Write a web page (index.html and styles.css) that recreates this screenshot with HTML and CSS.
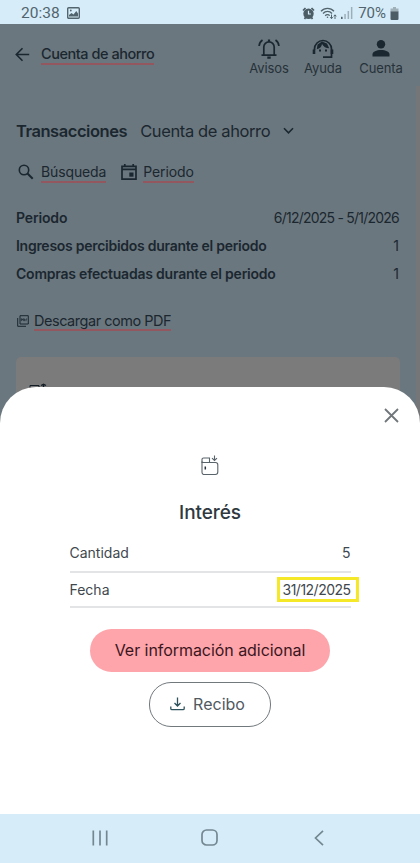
FILE: index.html
```html
<!DOCTYPE html>
<html lang="es">
<head>
<meta charset="utf-8">
<meta name="viewport" content="width=device-width, initial-scale=1">
<title>Cuenta de ahorro</title>
<link rel="stylesheet" href="styles.css">
</head>
<body>
<div class="status">
  <span class="clock">20:38</span>
  <svg class="picture" width="13" height="12" viewBox="0 0 13 12"><rect x=".7" y=".7" width="11.6" height="10.6" rx="1" fill="none" stroke="#52646d" stroke-width="1.4"/><path d="M2 9.5V8l2.5-2 2 1.5L9.3 4 11 6.500v3z" fill="#52646d"/><circle cx="3.800" cy="3.500" r=".9" fill="#52646d"/></svg>
  <div class="indicators">
    <svg width="13" height="13" viewBox="0 0 13 13"><circle cx="6.500" cy="6.800" r="5.200" fill="#4c5d66"/><path d="M1 3.500 3.500 1M12 3.500 9.500 1M2.500 12l1-1.500M10.500 12l-1-1.500" stroke="#4c5d66" stroke-width="1.700"/><path d="M6.500 3.800v3.200h2.400" stroke="#d6edf9" stroke-width="1.200" fill="none"/></svg>
    <svg class="wifi" width="17" height="13" viewBox="0 0 17 13" fill="none" stroke="#52646d" stroke-width="1.300"><path d="M1 4.300C4.500.3 10.500.3 14 4.300M3 6.500c2.600-2.900 6.500-2.900 9 0M5.200 8.700c1.300-1.500 3.300-1.500 4.500 0"/><circle cx="7.500" cy="10.300" r=".8" fill="#52646d" stroke="none"/><path d="M11.500 7.500v4m-1.300-1.300 1.300 1.500 1.300-1.500M15 12V8m-1.300 1.300L15 7.800l1.300 1.500" stroke-width="1"/></svg>
    <svg class="signal" width="12" height="12" viewBox="0 0 12 12" fill="#9caeb7"><path d="M0 9.500h1.500V12H0zM3.300 7h1.500v5H3.300zM6.600 4h1.500v8H6.600zM9.900 0h1.500v12H9.900z"/><path d="M0 10h1.500v2H0z" fill="#52646d"/></svg>
    <span class="percent">70%</span>
    <svg width="9" height="13" viewBox="0 0 9 13"><path d="M3 0h3v1.500h2.500V5H.5V1.500H3z" fill="#9fb0b9"/><path d="M.5 4.500h8V12a1 1 0 0 1-1 1h-6a1 1 0 0 1-1-1z" fill="#4c5d66"/></svg>
  </div>
</div>

<div class="page">
  <header class="top">
    <svg class="back" width="15" height="15" viewBox="0 0 15 15"><path d="M14.200 7.500H1.500M7.500 1.300 1.300 7.500l6.200 6.200" fill="none" stroke="#1b2730" stroke-width="1.600"/></svg>
    <a class="link title">Cuenta de ahorro</a>
    <nav class="actions">
      <div class="action avisos">
        <svg width="22" height="22" viewBox="0 0 22 22" fill="none" stroke="#1b2730" stroke-width="1.700"><path d="M3.500 17.200h15M5.800 17V9a5.200 5.200 0 0 1 10.400 0v8M4.500 2C2.300 3.500 1.300 5.500 1.100 8M17.500 2c2.200 1.500 3.200 3.500 3.400 6"/><path d="M11 4V1.500M9.300 19.700h3.400" stroke-width="2.200"/></svg>
        <span>Avisos</span>
      </div>
      <div class="action ayuda">
        <svg width="22" height="22" viewBox="0 0 22 22" fill="none" stroke="#1b2730" stroke-width="1.700"><path d="M2.500 12v-1a8.500 8.500 0 0 1 17 0v8.200H11"/><path d="M2 11.500v4.500M20 11.500v4.500" stroke-width="2.600"/><path d="M4.800 11.200C8 10.500 9.500 9 10 6c1.500 2.800 4 4.300 7.200 4.300L15 5.500l-5-2-4.500 3z" fill="#1b2730" stroke="none"/><path d="M8 11.600v2M14 11.600v2" stroke-width="2"/></svg>
        <span>Ayuda</span>
      </div>
      <div class="action cuenta">
        <svg width="22" height="22" viewBox="0 0 22 22" fill="#1b2730"><circle cx="11" cy="6.200" r="4.200"/><path d="M2.500 18.500v-2.200c0-2.600 4-4.300 8.500-4.300s8.500 1.700 8.500 4.300v2.200z"/></svg>
        <span>Cuenta</span>
      </div>
    </nav>
  </header>
  <main class="content">
    <div class="heading">
      <h1>Transacciones</h1>
      <span class="account">Cuenta de ahorro</span>
      <svg width="11" height="8" viewBox="0 0 11 8"><path d="m1 1.200 4.500 4.600L10 1.200" fill="none" stroke="#1b2730" stroke-width="1.600"/></svg>
    </div>
    <div class="filters">
      <svg width="16" height="16" viewBox="0 0 16 16" fill="none" stroke="#1b2730"><circle cx="6" cy="6" r="4.700" stroke-width="1.600"/><path d="m9.500 9.500 5.200 5.200" stroke-width="2"/></svg>
      <a class="link search">Búsqueda</a>
      <svg class="calendar" width="16" height="18" viewBox="0 0 16 18"><path d="M1 3.300h14v12.900H1zM1 6.300h14M3.800 1v2M12.200 1v2" fill="none" stroke="#1b2730" stroke-width="1.700"/><path d="M8.300 9.500h4.200v4.200H8.300z" fill="#1b2730"/></svg>
      <a class="link period">Periodo</a>
    </div>
    <dl class="summary">
      <div><dt class="s1">Periodo</dt><dd class="range">6/12/2025 - 5/1/2026</dd></div>
      <div><dt class="s2">Ingresos percibidos durante el periodo</dt><dd>1</dd></div>
      <div><dt class="s3">Compras efectuadas durante el periodo</dt><dd>1</dd></div>
    </dl>
    <div class="download">
      <svg width="12" height="12" viewBox="0 0 12 12" fill="none" stroke="#1b2730"><path d="M3 .7h8.300V9H3zM.7 3v8.300H9"/><path d="M4.300 3.500v2.600M4.300 4h1.200v1H4.300M6.600 3.500v2.300h1V4h-1M9 6.200V4h1.200" stroke-width=".7"/></svg>
      <a class="link pdf">Descargar como PDF</a>
    </div>
    <div class="card">
      <svg width="20" height="20" viewBox="0 0 20 20" fill="none" stroke="#111c24"><path d="M1 9V2.500h9V5"/><path d="m12 2.500 2.500-1.300L17 2.500M14.500 1v6" stroke-width="1.400"/></svg>
    </div>
  </main>
</div>

<section class="sheet">
  <svg class="close" width="15" height="15" viewBox="0 0 15 15"><path d="m1 1 13 13M14 1 1 14" stroke="#707679" stroke-width="1.800"/></svg>
  <svg class="wallet" width="18" height="21" viewBox="0 0 18 21" fill="none" stroke="#59636a" stroke-width="1.100"><path d="M1 8V4.500A1.500 1.500 0 0 1 2.500 3h6v4"/><path d="M1 6.500C1 7.300 1.500 7.500 2.500 7.500h12A2.300 2.300 0 0 1 16.800 9.800V17a2.500 2.500 0 0 1-2.500 2.500H3.300A2.300 2.300 0 0 1 1 17z"/><path d="M4.300 11.500v3" stroke="#263038" stroke-width="1.500"/><path d="M13.500.5v5M11 3.200l2.500 2.300L16 3.200"/></svg>
  <h2>Interés</h2>
  <div class="details">
    <div class="detail"><span class="k1">Cantidad</span><span>5</span></div>
    <div class="detail"><span class="k2">Fecha</span><span class="marked">31/12/2025</span></div>
  </div>
  <button class="primary"><span>Ver información adicional</span></button>
  <button class="secondary">
    <svg width="15" height="14" viewBox="0 0 15 14" fill="none" stroke="#2f535c" stroke-width="1.300"><path d="M7.500.5v8.300M4.500 6l3 3 3-3M.8 9.500v2q0 1.200 1.200 1.200h11q1.200 0 1.200-1.200v-2"/></svg>
    <span>Recibo</span>
  </button>
</section>

<div class="navbar">
  <svg width="16" height="16" viewBox="0 0 16 16"><path d="M1.300.5v15M8 .5v15M14.700.5v15" stroke="#738791" stroke-width="1.700"/></svg>
  <svg width="17" height="17" viewBox="0 0 17 17"><rect x="1" y="1" width="15" height="15" rx="4.500" fill="none" stroke="#738791" stroke-width="1.700"/></svg>
  <svg width="10" height="16" viewBox="0 0 10 16"><path d="M9 .8 1.500 8 9 15.200" fill="none" stroke="#738791" stroke-width="1.700"/></svg>
</div>
</body>
</html>
```
FILE: styles.css
```css
* { box-sizing: border-box; margin: 0; padding: 0; }
body {
  width: 420px;
  height: 863px;
  overflow: hidden;
  display: flex;
  flex-direction: column;
  font-family: Inter, "Liberation Sans", sans-serif;
  color: #1b2730;
  background: #fff;
}
svg { display: block; flex: none; }
span, a, h1, h2, dt, dd { white-space: nowrap; }

.status {
  height: 24px;
  flex: none;
  display: flex;
  align-items: center;
  padding: 2px 21px 0 21px;
  background: #d6edf9;
  color: #52646d;
  font: 15.5px/22px Roboto, sans-serif;
}
.picture { margin-left: 7px; }
.indicators { margin-left: auto; display: flex; align-items: center; }
.wifi { margin-left: 5px; }
.signal { margin-left: 4px; }
.percent { margin: 0 4px 0 5px; font-size: 15px; }

.page {
  height: 403px;
  flex: none;
  background: #6b777e;
  overflow: hidden;
}
.top { height: 62px; display: flex; padding-left: 15px; }
.back { margin: 23px 11px 0 0; }
.link { border-bottom: 2px solid #93585f; font-weight: 400; }
.title { margin-top: 19px; height: 22px; font-size: 14.500px; line-height: 22px; font-weight: 500; letter-spacing: -.46px; }
.actions { margin-left: auto; display: flex; }
.action { display: flex; flex-direction: column; align-items: center; padding-top: 14px; font-size: 13px; line-height: 16px; width: 54px; color: #26323a; letter-spacing: -.1px; }
.cuenta { width: 62px; margin-right: 8px; }

.content { height: 341px; border-right: 4px solid #747677; padding: 33px 17px 0 16px; }
.heading { display: flex; align-items: center; height: 24px; }
h1 { font-size: 16.500px; font-weight: 600; line-height: 24px; letter-spacing: -.45px; }
.account { font-size: 16.500px; letter-spacing: -.38px; margin: 0 13px 0 13px; }
.filters { display: flex; align-items: center; height: 22px; margin-top: 18px; padding-left: 2px; font-size: 14px; letter-spacing: -.12px; }
.filters .link { height: 22px; line-height: 22px; }
.search { margin: 0 15px 0 7px; }
.period { margin-left: 6px; }
.summary { margin-top: 21px; font-size: 14px; line-height: 28px; }
.summary div { display: flex; justify-content: space-between; }
dt { font-weight: 600; }
.s1 { letter-spacing: -.15px; }
.s2 { letter-spacing: -.27px; }
.s3 { letter-spacing: -.22px; }
.range { letter-spacing: -.77px; }
.download { display: flex; align-items: center; margin-top: 23px; height: 20px; font-size: 14.500px; padding-left: 1px; }
.download .link { height: 20px; line-height: 19px; margin-left: 5px; letter-spacing: -.47px; }
.card { margin-top: 26px; height: 90px; margin-right: -1px; border-radius: 5px; background: #7b7b7c; padding: 26px 0 0 13px; }

.sheet {
  flex: 1;
  margin-top: -40px;
  border-radius: 36px 36px 0 0;
  background: #fff;
  display: flex;
  flex-direction: column;
  align-items: center;
  color: #3f484e;
}
.close { margin: 21px 21px 0 0; align-self: flex-end; }
.wallet { margin-top: 32px; }
h2 { margin-top: 24px; font-size: 19px; line-height: 26px; font-weight: 500; color: #2f3940; letter-spacing: -.08px; }
.details { width: 281px; margin-top: 9px; font-size: 14px; }
.detail { display: flex; justify-content: space-between; align-items: center; height: 36px; border-bottom: 2px solid #e2e4e5; padding-bottom: 1px; }
.detail:first-child { height: 38px; padding-bottom: 2px; }
.detail:last-child { height: 35px; padding-bottom: 0; }
.marked { border: 3px solid #f5e829; margin-right: -8px; padding-left: 3px; width: 82px; height: 25px; line-height: 19px; letter-spacing: -.5px; }
button { display: flex; align-items: center; justify-content: center; font-family: inherit; border: 0; border-radius: 22px; }
.primary { width: 240px; height: 43px; margin-top: 21px; padding-bottom: 1px; background: #fda5ab; color: #3b151d; font-size: 16px; letter-spacing: -.05px; }
.secondary { width: 122px; height: 45px; margin-top: 10px; padding: 0 5px 1px 0; background: #fff; border: 1px solid #72797d; color: #505a61; font-size: 16px; gap: 8px; }
.navbar { height: 49px; flex: none; display: flex; align-items: center; padding: 0 0 2px 92px; background: #d6edf9; }
.navbar svg + svg { margin-left: 93px; }
.navbar svg:last-child { margin-left: 96px; }
```
